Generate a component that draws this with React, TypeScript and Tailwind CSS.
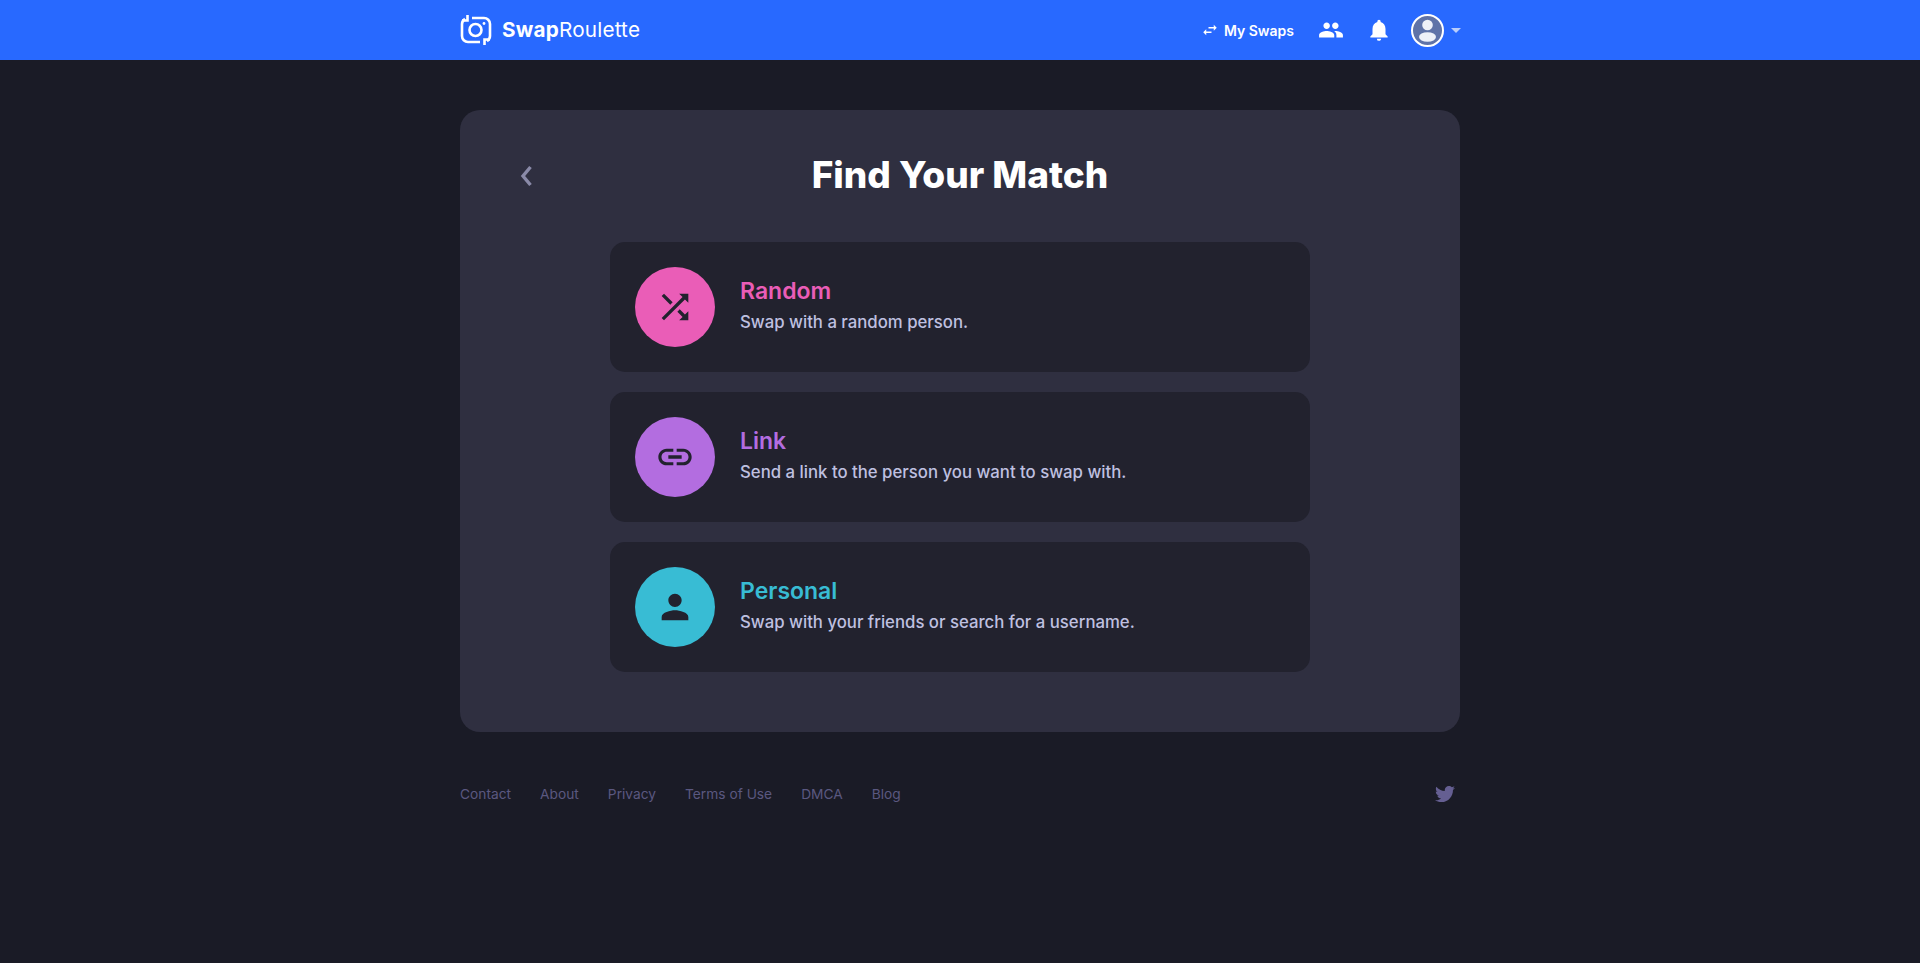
import { MdLink, MdNotifications, MdPeople, MdPerson, MdShuffle, MdSwapHoriz } from 'react-icons/md';
import { FaTwitter } from 'react-icons/fa';

const modes = [
    {
        title: 'Random',
        text: 'Swap with a random person.',
        circle: 'bg-[#ea5db7]',
        color: 'text-[#ea5db7]',
        icon: <MdShuffle size={40} />,
    },
    {
        title: 'Link',
        text: 'Send a link to the person you want to swap with.',
        circle: 'bg-[#b36de0]',
        color: 'text-[#b36de0]',
        icon: <MdLink size={40} />,
    },
    {
        title: 'Personal',
        text: 'Swap with your friends or search for a username.',
        circle: 'bg-[#38bcd4]',
        color: 'text-[#38bcd4]',
        icon: <MdPerson size={40} />,
    },
];

const footerLinks = ['Contact', 'About', 'Privacy', 'Terms of Use', 'DMCA', 'Blog'];

function Logo() {
    return (
        <svg width="32" height="32" viewBox="0 0 32 32" fill="none" stroke="white" strokeWidth="2.6" aria-hidden="true">
            <path d="M20 28H8a6 6 0 0 1-6-6V10a6 6 0 0 1 3-5" />
            <path d="M7.5 1V6.5H2" />
            <path d="M12 4H24a6 6 0 0 1 6 6V22a6 6 0 0 1-3 5" />
            <path d="M24.5 31V25.5H30" />
            <circle cx="15.5" cy="16" r="6" />
            <circle cx="24" cy="9.5" r="1.4" fill="white" stroke="none" />
        </svg>
    );
}

export default function App() {
    return (
        <div className="min-h-[963px] bg-[#1a1b26] font-['Inter',sans-serif]">
            <nav className="h-[60px] bg-[#2869ff]">
                <div className="mx-auto flex h-full w-[1000px] items-center justify-between">
                    <div className="flex items-center gap-[10px]">
                        <Logo />
                        <span className="text-[20.7px] tracking-[0.2px] text-white">
                            <span className="font-bold">Swap</span>Roulette
                        </span>
                    </div>
                    <div className="-mr-px flex items-center">
                        <MdSwapHoriz size={18} className="text-white" />
                        <span className="ml-[5px] text-[14px] font-semibold text-white">My Swaps</span>
                        <MdPeople size={26} className="ml-6 text-white" />
                        <MdNotifications size={26} className="ml-[22px] text-white" />
                        <div className="ml-[19px] h-[33px] w-[33px] rounded-full border-2 border-white bg-[#5f73a8]">
                            <svg width="29" height="29" viewBox="0 0 29 29" aria-hidden="true">
                                <circle cx="14.5" cy="9" r="5.3" fill="#eef1f8" />
                                <ellipse cx="14.5" cy="21" rx="8.5" ry="4.8" fill="#eef1f8" />
                            </svg>
                        </div>
                        <div className="ml-[7px] h-0 w-0 border-x-[5px] border-t-[5px] border-x-transparent border-t-[#b9cdfb]" />
                    </div>
                </div>
            </nav>

            <main className="mx-auto mt-[50px] w-[1000px] rounded-[20px] bg-[#2f2f40] pb-[60px]">
                <div className="relative pt-[40px] text-center">
                    <svg
                        className="absolute left-[60px] top-[55px]"
                        width="12"
                        height="22"
                        viewBox="0 0 12 22"
                        fill="none"
                        stroke="#8a8aa8"
                        strokeWidth="3.4"
                        aria-hidden="true"
                    >
                        <path d="M10.5 2L3 11L10.5 20" />
                    </svg>
                    <h1 className="text-[37px] leading-[50px] font-extrabold text-white">Find Your Match</h1>
                </div>
                <div className="mx-auto mt-[42px] flex w-[700px] flex-col gap-5">
                    {modes.map((mode) => (
                        <div key={mode.title} className="flex h-[130px] items-center rounded-[15px] bg-[#22222e] px-[25px]">
                            <div
                                className={`flex h-20 w-20 items-center justify-center rounded-full text-[#22222e] ${mode.circle}`}
                            >
                                {mode.icon}
                            </div>
                            <div className="mb-[3px] ml-[25px]">
                                <div className={`text-[23px] leading-[33px] font-semibold ${mode.color}`}>{mode.title}</div>
                                <div className="text-[16.75px] leading-[29px] font-medium text-[#bfc0e0]">{mode.text}</div>
                            </div>
                        </div>
                    ))}
                </div>
            </main>

            <footer className="mx-auto mt-[52px] flex w-[1000px] items-center justify-between">
                <div className="flex gap-[29px] text-[13.75px] text-[#5a5880]">
                    {footerLinks.map((link) => (
                        <span key={link}>{link}</span>
                    ))}
                </div>
                <FaTwitter size={20} className="mr-[5px] text-[#655f92]" />
            </footer>
        </div>
    );
}
